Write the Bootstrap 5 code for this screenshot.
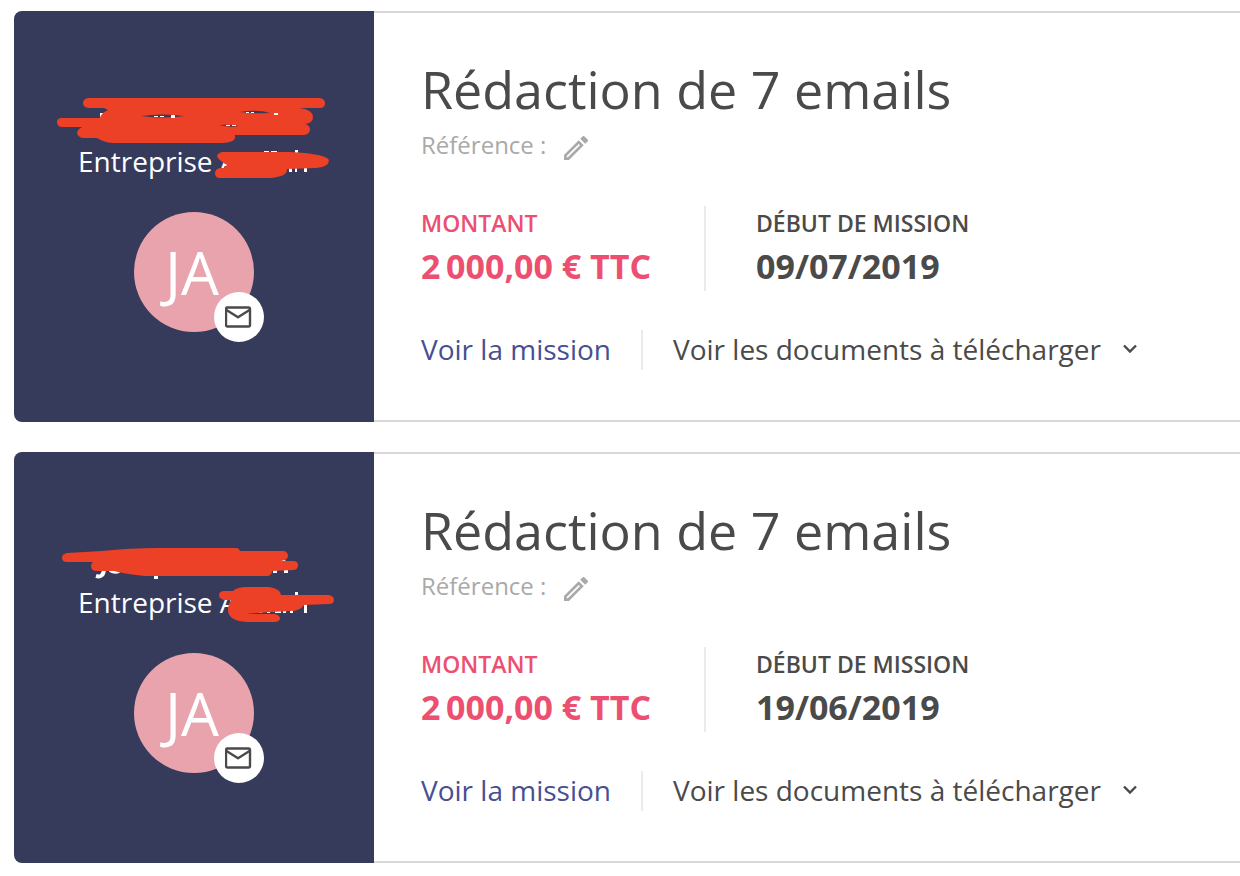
<!DOCTYPE html>
<html lang="fr">
<head>
<meta charset="utf-8">
<meta name="viewport" content="width=device-width, initial-scale=1">
<title>Missions</title>
<link href="https://cdn.jsdelivr.net/npm/bootstrap@5.3.0/dist/css/bootstrap.min.css" rel="stylesheet">
<script src="https://cdn.jsdelivr.net/npm/bootstrap@5.3.0/dist/js/bootstrap.bundle.min.js" defer></script>
<style>
body { font-family: "Open Sans", "Noto Sans", sans-serif; color: #4a4a4a; background: #fff; font-size: 28px; line-height: 40px; }
.missions { padding: 11px 0 12px 14px; gap: 30px; }
.mission-card { border-radius: 8px 0 0 8px; }
.client { width: 360px; background: #363a5b; border-radius: 8px 0 0 8px; padding-top: 90px; }
.client-name { height: 40px; }
.company { width: 232px; }
.scribble { left: 0; top: 70px; }
.avatar { width: 120px; height: 120px; margin-top: 31px; background: #e8a3ad; font-size: 60px; padding-right: 4px; }
.mail-btn { width: 50px; height: 50px; right: -10px; bottom: -10px; background: #fff; border: 0; color: #4a4a4a; }
.mission-body { border: 2px solid #d8d8d8; border-width: 2px 0; padding: 46px 47px 50px; }
.mission-title { font-size: 52px; line-height: 60px; font-weight: 400; margin: 0 0 6px; }
.reference { font-size: 24px; color: #a9a9a9; gap: 14px; margin-bottom: 41px; }
.edit-btn { color: #a9a9a9; background: none; border: 0; margin-top: 6px; }
.stat-start { width: 285px; border-right: 2px solid #ebebeb; }
.stat-next { padding-left: 50px; }
.stat-label { font-size: 23px; line-height: 34px; font-weight: 600; }
.stat-value { font-size: 34px; line-height: 50px; font-weight: 700; padding-top: 1px; }
.pink { color: #ed4f70; }
.stats { margin-bottom: 39px; }
.actions { line-height: 38px; }
.view-link { color: #474f92; width: 222px; border-right: 2px solid #ebebeb; padding-bottom: 2px; }
.docs-btn { background: none; border: 0; color: #4a4a4a; padding: 0 0 2px 30px; gap: 22px; }
</style>
</head>
<body>
<main class="missions d-flex flex-column">

<article class="mission-card d-flex">
  <aside class="client position-relative flex-shrink-0 d-flex flex-column align-items-center text-white">
    <div class="client-name"></div>
    <div class="company">Entreprise A</div>
    <svg class="scribble position-absolute" width="360" height="120" viewBox="14 81 360 120" aria-hidden="true">
      <path fill="#fff" d="M100 113h3v6h-3zM264 151h5v2h-5zM271 151h6v2h-6zM295 150h3v6h-3zM272 168h14v2h-14zM289 167h3v5h-3zM295 167h2v5h-2zM304 165h3v7h-3z"/>
      <path fill="#ec4126" d="M88 98H320Q325 99 325 103Q325 108 320 108H300Q313 110 313 117Q313 123 305 124Q310 125 310 130Q309 135 303 135H235V137Q236 142 222 143H114Q105 143 97 138H83Q77 137 77 132Q78 129 82 127H61Q57 126 57 122Q57 118 62 118H100Q101 113 108 110L104 108H88Q83 107 83 103Q83 99 88 98Z"/>
      <path fill="#363a5b" d="M141 116Q163 113 184 116Q163 119 141 116ZM240 112Q258 109 270 113Q255 114 240 112ZM219 125Q229 124 239 126Q230 128 219 125Z"/>
      <path fill="#fff" d="M154 116h4v1h-4zM160 116h4v1h-4zM171 115h4v3h-4zM246 112h3v1h-3zM251 112h3v1h-3zM274 113h4v2h-4zM226 125h4v1h-4zM232 125h4v1h-4z"/>
      <path fill="#ec4126" d="M222 152H290Q329 154 329 161Q328 167 316 168L287 169Q288 177 269 178H220Q215 178 215 173Q215 169 220 168H224L227 165Q218 160 217 156Q218 153 222 152Z"/>
    </svg>
    <div class="avatar rounded-circle position-relative d-flex align-items-center justify-content-center">JA
      <button type="button" class="mail-btn rounded-circle position-absolute p-0 d-flex align-items-center justify-content-center" aria-label="Envoyer un message"><svg width="28" height="22" viewBox="1 0 28 22" fill="none" stroke="currentColor" stroke-width="2.4" stroke-linejoin="round"><rect x="2" y="1.5" width="24" height="19" rx="1.5"/><path d="M2.5 4 14 11.3 25.5 4"/></svg></button>
    </div>
  </aside>
  <section class="mission-body flex-grow-1">
    <h2 class="mission-title">Rédaction de 7 emails</h2>
    <div class="reference d-flex align-items-center"><span>Référence :</span><button type="button" class="edit-btn p-0 d-flex" aria-label="Modifier la référence"><svg width="32" height="32" viewBox="0 0 24 24" fill="currentColor"><path d="M14.06 9.02l.92.92L5.92 19H5v-.92l9.06-9.06M17.66 3c-.25 0-.51.1-.7.29l-1.83 1.83 3.75 3.75 1.83-1.83c.39-.39.39-1.02 0-1.41l-2.34-2.34c-.2-.2-.45-.29-.71-.29zm-3.6 3.19L3 17.25V21h3.75L17.81 9.94l-3.75-3.75z"/></svg></button></div>
    <div class="stats d-flex">
      <div class="stat-start pink"><div class="stat-label">MONTANT</div><div class="stat-value">2&#8201;000,00 € TTC</div></div>
      <div class="stat-next"><div class="stat-label">DÉBUT DE MISSION</div><div class="stat-value">09/07/2019</div></div>
    </div>
    <div class="actions d-flex">
      <a href="#" class="view-link text-decoration-none">Voir la mission</a>
      <button type="button" class="docs-btn d-flex align-items-center">Voir les documents à télécharger <svg width="14" height="10" viewBox="0 0 14 10" fill="none" stroke="currentColor" stroke-width="2.4"><path d="M1 1.5 7 7.5 13 1.5"/></svg></button>
    </div>
  </section>
</article>

<article class="mission-card d-flex">
  <aside class="client position-relative flex-shrink-0 d-flex flex-column align-items-center text-white">
    <div class="client-name"></div>
    <div class="company">Entreprise A</div>
    <svg class="scribble position-absolute" width="360" height="120" viewBox="14 522 360 120" aria-hidden="true">
      <path fill="none" stroke="#fff" stroke-width="4" d="M96 576Q103 578 104 570M110 570Q115 573 119 571M156 574V579M275 566V573M281 562Q286 561 286 566V573"/>
      <path fill="#fff" d="M295 592h3v9h-3zM304 603h3v10h-3zM251 611h3v2h-3zM259 611h3v2h-3zM267 611h3v2h-3zM275 611h6v2h-6zM283 611h3v2h-3zM290 609h3v4h-3z"/>
      <path fill="#ec4126" d="M67 553L102 551Q130 548 160 548H236Q239 548 240 551H284Q288 552 288 556Q288 560 281 561H293Q298 561 298 565Q298 570 293 570L272 571Q272 575 268 576H145Q125 574 114 571H97Q91 571 91 566Q91 563 93 562H67Q62 562 62 558Q62 554 67 553Z"/>
      <path fill="#ec4126" d="M223 591H233Q237 587 247 587H269Q281 589 281 595H329Q334 596 334 600Q334 604 329 604L304 605Q300 611 290 611Q266 612 246 614H275Q280 615 280 619Q279 622 274 622H247Q229 621 228 611Q228 604 231 600H224Q219 599 219 595Q219 592 223 591Z"/>
    </svg>
    <div class="avatar rounded-circle position-relative d-flex align-items-center justify-content-center">JA
      <button type="button" class="mail-btn rounded-circle position-absolute p-0 d-flex align-items-center justify-content-center" aria-label="Envoyer un message"><svg width="28" height="22" viewBox="1 0 28 22" fill="none" stroke="currentColor" stroke-width="2.4" stroke-linejoin="round"><rect x="2" y="1.5" width="24" height="19" rx="1.5"/><path d="M2.5 4 14 11.3 25.5 4"/></svg></button>
    </div>
  </aside>
  <section class="mission-body flex-grow-1">
    <h2 class="mission-title">Rédaction de 7 emails</h2>
    <div class="reference d-flex align-items-center"><span>Référence :</span><button type="button" class="edit-btn p-0 d-flex" aria-label="Modifier la référence"><svg width="32" height="32" viewBox="0 0 24 24" fill="currentColor"><path d="M14.06 9.02l.92.92L5.92 19H5v-.92l9.06-9.06M17.66 3c-.25 0-.51.1-.7.29l-1.83 1.83 3.75 3.75 1.83-1.83c.39-.39.39-1.02 0-1.41l-2.34-2.34c-.2-.2-.45-.29-.71-.29zm-3.6 3.19L3 17.25V21h3.75L17.81 9.94l-3.75-3.75z"/></svg></button></div>
    <div class="stats d-flex">
      <div class="stat-start pink"><div class="stat-label">MONTANT</div><div class="stat-value">2&#8201;000,00 € TTC</div></div>
      <div class="stat-next"><div class="stat-label">DÉBUT DE MISSION</div><div class="stat-value">19/06/2019</div></div>
    </div>
    <div class="actions d-flex">
      <a href="#" class="view-link text-decoration-none">Voir la mission</a>
      <button type="button" class="docs-btn d-flex align-items-center">Voir les documents à télécharger <svg width="14" height="10" viewBox="0 0 14 10" fill="none" stroke="currentColor" stroke-width="2.4"><path d="M1 1.5 7 7.5 13 1.5"/></svg></button>
    </div>
  </section>
</article>

</main>
</body>
</html>
